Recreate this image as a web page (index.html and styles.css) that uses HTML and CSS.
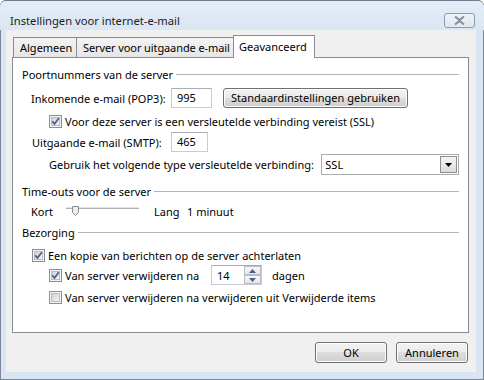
FILE: index.html
```html
<!DOCTYPE html>
<html lang="nl">
<head>
<meta charset="utf-8">
<title>Instellingen voor internet-e-mail</title>
<link rel="stylesheet" href="styles.css">
</head>
<body>
<svg class="defs" width="0" height="0" aria-hidden="true">
  <defs>
    <linearGradient id="cbfill" x1="0" y1="0" x2="1" y2="1">
      <stop offset="0" stop-color="#cbcfd5"/>
      <stop offset="1" stop-color="#f7f7f7"/>
    </linearGradient>
  </defs>
</svg>
<div class="window">
  <div class="titlebar">
    <span class="title">Instellingen voor internet-e-mail</span>
    <span class="close">
      <svg width="13" height="11" viewBox="0 0 13 11"><path d="M2 1.5 L6.5 5 L11 1.5 M2 9.5 L6.5 6 L11 9.5" fill="none" stroke="#8a8f99" stroke-width="2.2"/></svg>
    </span>
  </div>
  <div class="client">
    <div class="tabs">
      <div class="tab">Algemeen</div>
      <div class="tab tab-server">Server voor uitgaande e-mail</div>
      <div class="tab active">Geavanceerd</div>
    </div>
    <div class="panel">
      <div class="group-title"><span>Poortnummers van de server</span><i class="rule"></i></div>

      <div class="row r-pop">
        <span class="lbl w140">Inkomende e-mail (POP3):</span>
        <span class="field f995">995</span>
        <span class="btn btn-std">Standaardinstellingen gebruiken</span>
      </div>

      <div class="row r-cb ind2 mt6">
        <svg class="cb" width="13" height="13" viewBox="0 0 13 13"><rect x="0.5" y="0.5" width="12" height="12" fill="#f4f4f4" stroke="#8e8f8f"/><rect x="2.5" y="2.5" width="8" height="8" fill="url(#cbfill)" stroke="#b9bcc2"/><path d="M3.3 6.4 L5.5 8.9 L9.8 3.2" fill="none" stroke="#4c5c8c" stroke-width="1.7"/></svg>
        <span>Voor deze server is een versleutelde verbinding vereist (SSL)</span>
      </div>

      <div class="row r-smtp">
        <span class="lbl w139">Uitgaande e-mail (SMTP):</span>
        <span class="field f465">465</span>
      </div>

      <div class="row r-enc ind2">
        <span class="lbl w273">Gebruik het volgende type versleutelde verbinding:</span>
        <span class="select">
          <span>SSL</span>
          <span class="dd"><svg width="7" height="4" viewBox="0 0 7 4"><path d="M0 0 H7 L3.5 4 Z" fill="#000"/></svg></span>
        </span>
      </div>

      <div class="group-title mt9"><span>Time-outs voor de server</span><i class="rule"></i></div>

      <div class="row r-slider">
        <span class="lbl w35">Kort</span>
        <svg class="slider" width="73" height="16" viewBox="0 0 73 16"><rect x="0" y="5" width="73" height="1" fill="#b1b1b1"/><rect x="0" y="6" width="73" height="1" fill="#ffffff"/><rect x="0" y="4" width="73" height="1" fill="#e3e3e3"/><path d="M6.5 3.5 H12.5 V9.5 L9.5 12.5 L6.5 9.5 Z" fill="#eeeeee" stroke="#8c8c8c"/></svg>
        <span class="lbl lang">Lang</span>
        <span>1 minuut</span>
      </div>

      <div class="group-title mt6"><span>Bezorging</span><i class="rule"></i></div>

      <div class="row r-cb ind1 mt7">
        <svg class="cb" width="13" height="13" viewBox="0 0 13 13"><rect x="0.5" y="0.5" width="12" height="12" fill="#f4f4f4" stroke="#8e8f8f"/><rect x="2.5" y="2.5" width="8" height="8" fill="url(#cbfill)" stroke="#b9bcc2"/><path d="M3.3 6.4 L5.5 8.9 L9.8 3.2" fill="none" stroke="#4c5c8c" stroke-width="1.7"/></svg>
        <span>Een kopie van berichten op de server achterlaten</span>
      </div>

      <div class="row r-spin ind2">
        <svg class="cb" width="13" height="13" viewBox="0 0 13 13"><rect x="0.5" y="0.5" width="12" height="12" fill="#f4f4f4" stroke="#8e8f8f"/><rect x="2.5" y="2.5" width="8" height="8" fill="url(#cbfill)" stroke="#b9bcc2"/><path d="M3.3 6.4 L5.5 8.9 L9.8 3.2" fill="none" stroke="#4c5c8c" stroke-width="1.7"/></svg>
        <span class="lbl w146">Van server verwijderen na</span>
        <span class="spin">
          <span class="spin-val">14</span>
          <span class="spin-btns">
            <span class="sb"><svg width="7" height="4" viewBox="0 0 7 4"><path d="M0 4 H7 L3.5 0 Z" fill="#4d6185"/></svg></span>
            <span class="sb"><svg width="7" height="4" viewBox="0 0 7 4"><path d="M0 0 H7 L3.5 4 Z" fill="#4d6185"/></svg></span>
          </span>
        </span>
        <span class="dagen">dagen</span>
      </div>

      <div class="row r-cb ind2 mt5">
        <svg class="cb" width="13" height="13" viewBox="0 0 13 13"><rect x="0.5" y="0.5" width="12" height="12" fill="#f4f4f4" stroke="#8e8f8f"/><rect x="2.5" y="2.5" width="8" height="8" fill="url(#cbfill)" stroke="#b9bcc2"/></svg>
        <span>Van server verwijderen na verwijderen uit Verwijderde items</span>
      </div>
    </div>
    <div class="footer">
      <span class="btn btn-dlg">OK</span>
      <span class="btn btn-dlg">Annuleren</span>
    </div>
  </div>
</div>
</body>
</html>
```

FILE: styles.css
```css
html, body {
  margin: 0;
  padding: 0;
  background: #ffffff;
}
.defs {
  position: absolute;
  width: 0;
  height: 0;
}
body {
  font-family: "Noto Sans", "Open Sans", sans-serif;
  font-size: 11px;
  color: #000;
}
.window {
  width: 484px;
  height: 380px;
  box-sizing: border-box;
  background: #d9e5f2;
  border-radius: 6px 6px 0 0;
  box-shadow: inset 0 0 0 1px #7a8696;
  overflow: hidden;
}
.titlebar {
  height: 30px;
  box-sizing: border-box;
  padding: 12px 9px 3px 10px;
  display: flex;
  align-items: center;
  justify-content: space-between;
  background: linear-gradient(#e4edf7, #dae6f3);
  border-top: 1px solid #6f7b8b;
  border-radius: 6px 6px 0 0;
}
.title {
  font-size: 11.2px;
  color: #1b1b1b;
  line-height: 15px;
}
.close {
  width: 31px;
  height: 15px;
  box-sizing: border-box;
  border: 1px solid #8f99a8;
  border-radius: 3px;
  background: linear-gradient(#eef3f9, #dfe7f1);
  display: flex;
  align-items: center;
  justify-content: center;
}
.client {
  margin-left: 6px;
  width: 470px;
  height: 342px;
  background: #f0f0f0;
  box-sizing: border-box;
  padding-top: 5px;
}
.tabs {
  display: flex;
  align-items: flex-end;
  padding-left: 7px;
  height: 23px;
  margin-bottom: -1px;
  position: relative;
  z-index: 1;
}
.tab {
  height: 20px;
  box-sizing: border-box;
  border: 1px solid #898c95;
  border-bottom: none;
  background: linear-gradient(#f3f3f3, #e6e6e6);
  padding: 0 0 0 6px;
  line-height: 19px;
  margin-right: -1px;
  margin-bottom: 1px;
  white-space: nowrap;
  overflow: hidden;
}
.tab:first-child { width: 64px; }
.tab-server { width: 158px; padding-left: 6px; letter-spacing: -0.1px; }
.tab.active {
  height: 23px;
  width: 82px;
  background: #ffffff;
  margin-bottom: 0;
  line-height: 21px;
  padding: 0 0 0 5px;
}
.panel {
  margin-left: 6px;
  width: 457px;
  height: 276px;
  box-sizing: border-box;
  border: 1px solid #898c95;
  background: #ffffff;
  padding: 9px 9px 0 9px;
}
.group-title {
  display: flex;
  align-items: center;
  height: 16px;
  line-height: 16px;
  white-space: nowrap;
}
.rule {
  flex: 1;
  height: 1px;
  background: #b4b4b4;
  margin-left: 3px;
  margin-top: -2px;
}
.row {
  display: flex;
  align-items: center;
  white-space: nowrap;
}
.mt5 { margin-top: 5px; }
.mt6 { margin-top: 6px; }
.mt7 { margin-top: 7px; }
.mt9 { margin-top: 9px; }
.ind1 { padding-left: 10px; }
.ind2 { padding-left: 27px; }
.lbl { display: inline-block; }
.w140 { width: 140px; }
.w139 { width: 139px; }
.w273 { width: 273px; }
.w35 { width: 35px; }
.w146 { width: 146px; }
.r-pop {
  margin-top: 5px;
  height: 20px;
  padding-left: 9px;
}
.r-cb { height: 15px; }
.r-cb .cb { margin-right: 3px; }
.r-smtp {
  margin-top: 3px;
  height: 20px;
  padding-left: 10px;
}
.r-enc {
  margin-top: 2px;
  height: 21px;
}
.r-slider {
  margin-top: 3px;
  height: 16px;
  padding-left: 9px;
}
.lang {
  margin-left: 15px;
  width: 33px;
}
.r-spin {
  margin-top: 2px;
  height: 20px;
}
.r-spin .cb { margin-right: 3px; }
.field {
  height: 20px;
  box-sizing: border-box;
  border: 1px solid #c8cbd0;
  border-top-color: #abadb3;
  background: #fff;
  padding-left: 5px;
  line-height: 18px;
}
.f995 { width: 41px; }
.f465 { width: 37px; }
.btn {
  box-sizing: border-box;
  border: 1px solid #707070;
  border-radius: 3px;
  background: linear-gradient(#f2f2f2 0%, #ebebeb 50%, #dddddd 50%, #cfcfcf 100%);
  box-shadow: inset 0 0 0 1px #fcfcfc;
  text-align: center;
  display: inline-block;
}
.btn-std {
  margin-left: 11px;
  width: 185px;
  height: 20px;
  line-height: 18px;
}
.select {
  width: 138px;
  height: 21px;
  box-sizing: border-box;
  border: 1px solid #a9abb0;
  background: #fff;
  display: flex;
  align-items: center;
  justify-content: space-between;
  padding: 0 1px 0 3px;
}
.dd {
  width: 17px;
  height: 17px;
  box-sizing: border-box;
  border: 1px solid #8d8d8d;
  background: linear-gradient(#f4f4f4, #dcdcdc);
  display: flex;
  align-items: center;
  justify-content: center;
}
.spin {
  width: 51px;
  height: 20px;
  box-sizing: border-box;
  border: 1px solid #c8cbd0;
  border-top-color: #abadb3;
  background: #fff;
  display: flex;
  align-items: stretch;
  justify-content: space-between;
}
.spin-val {
  padding-left: 5px;
  line-height: 19px;
}
.spin-btns {
  width: 17px;
  display: flex;
  flex-direction: column;
}
.sb {
  flex: 1;
  box-sizing: border-box;
  border: 1px solid #b8bdc6;
  background: linear-gradient(#f7f9fb, #e2e6ec);
  display: flex;
  align-items: center;
  justify-content: center;
}
.dagen { margin-left: 10px; }
.footer {
  display: flex;
  justify-content: flex-end;
  gap: 9px;
  padding-right: 8px;
  margin-top: 9px;
}
.btn-dlg {
  width: 72px;
  height: 21px;
  line-height: 19px;
}
```
